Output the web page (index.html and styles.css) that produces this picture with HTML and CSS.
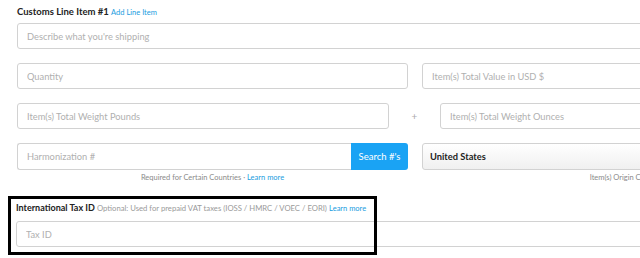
FILE: index.html
```html
<!DOCTYPE html>
<html lang="en">
<head>
    <meta charset="UTF-8">
    <meta name="viewport" content="width=device-width, initial-scale=1.0">
    <title>Customs Line Item</title>
    <link rel="stylesheet" href="styles.css">
</head>
<body>
    <div class="form">
        <div class="section-title">Customs Line Item #1 <a href="#" class="link">Add Line Item</a></div>
        <input class="field" type="text" placeholder="Describe what you're shipping">

        <div class="row row-two">
            <input class="field" type="text" placeholder="Quantity">
            <input class="field" type="text" placeholder="Item(s) Total Value in USD $">
        </div>

        <div class="row row-weight">
            <input class="field" type="text" placeholder="Item(s) Total Weight Pounds">
            <span class="plus">+</span>
            <input class="field" type="text" placeholder="Item(s) Total Weight Ounces">
        </div>

        <div class="row row-two">
            <div class="field-group">
                <div class="hs-search">
                    <input class="field" type="text" placeholder="Harmonization #">
                    <button class="search-btn" type="button">Search #'s</button>
                </div>
                <p class="hint">Required for Certain Countries · <a href="#" class="link">Learn more</a></p>
            </div>
            <div class="field-group">
                <select class="field select">
                    <option>United States</option>
                </select>
                <p class="hint">Item(s) Origin Country</p>
            </div>
        </div>

        <div class="tax">
            <div class="section-title">International Tax ID <span class="note">Optional: Used for prepaid VAT taxes (IOSS / HMRC / VOEC / EORI)</span> <a href="#" class="link">Learn more</a></div>
            <input class="field tax-field" type="text" placeholder="Tax ID">
            <div class="highlight"></div>
        </div>
    </div>
</body>
</html>
```

FILE: styles.css
```css
body {
    font-family: 'Lato', 'Open Sans', sans-serif;
    margin: 0;
    padding: 0;
    background-color: #ffffff;
    width: 640px;
    height: 258px;
    overflow: hidden;
}
.form {
    position: relative;
    width: 813px;
    padding: 5px 0 0 17px;
}
.section-title {
    font-size: 9.5px;
    line-height: 14px;
    font-weight: 700;
    color: #222;
    margin-bottom: 3px;
    white-space: nowrap;
}
.link {
    color: #1a9de0;
    font-weight: 400;
    font-size: 7.5px;
    text-decoration: none;
}
.note {
    color: #9a9a9a;
    font-weight: 400;
    font-size: 7.7px;
}
.field {
    display: block;
    width: 100%;
    height: 26px;
    box-sizing: border-box;
    border: 1px solid #d2d2d2;
    border-radius: 3px;
    padding: 0 9px;
    font-family: 'Lato', sans-serif;
    font-size: 9.3px;
    color: #333;
    background-color: #fff;
    outline: none;
}
.field::placeholder {
    color: #b0b0b0;
}
.row {
    display: grid;
    margin-top: 14px;
    align-items: start;
}
.row-two {
    grid-template-columns: 391px 1fr;
    column-gap: 14px;
}
.row-weight {
    grid-template-columns: 372px 51px 1fr;
}
.plus {
    text-align: center;
    color: #aaa;
    font-size: 10px;
    line-height: 26px;
}
.hs-search {
    display: flex;
}
.hs-search .field {
    flex: 1;
    height: 27px;
    border-radius: 3px 0 0 3px;
    border-right: none;
}
.search-btn {
    width: 57px;
    height: 27px;
    border: none;
    border-radius: 0 3px 3px 0;
    background-color: #1aa3f4;
    color: #fff;
    font-family: 'Lato', sans-serif;
    font-size: 9.5px;
    padding: 0;
}
.select {
    -webkit-appearance: none;
    appearance: none;
    height: 27px;
    background: linear-gradient(#ffffff, #f0f0f0);
    font-size: 9.3px;
    font-weight: 700;
    color: #222;
    padding-left: 7px;
}
.hint {
    margin: 2px 0 0;
    font-size: 7.5px;
    line-height: 12px;
    color: #8a8a8a;
    text-align: center;
}
.hint .link {
    font-size: 7.5px;
}
.tax {
    position: relative;
    margin-top: 18px;
    margin-left: -1px;
}
.tax .section-title {
    font-size: 9px;
    line-height: 12px;
    margin-bottom: 6px;
}
.tax-field {
    height: 26px;
}
.highlight {
    position: absolute;
    left: -8px;
    top: -6px;
    width: 363px;
    height: 53px;
    border: 3px solid #000;
    pointer-events: none;
}
```
